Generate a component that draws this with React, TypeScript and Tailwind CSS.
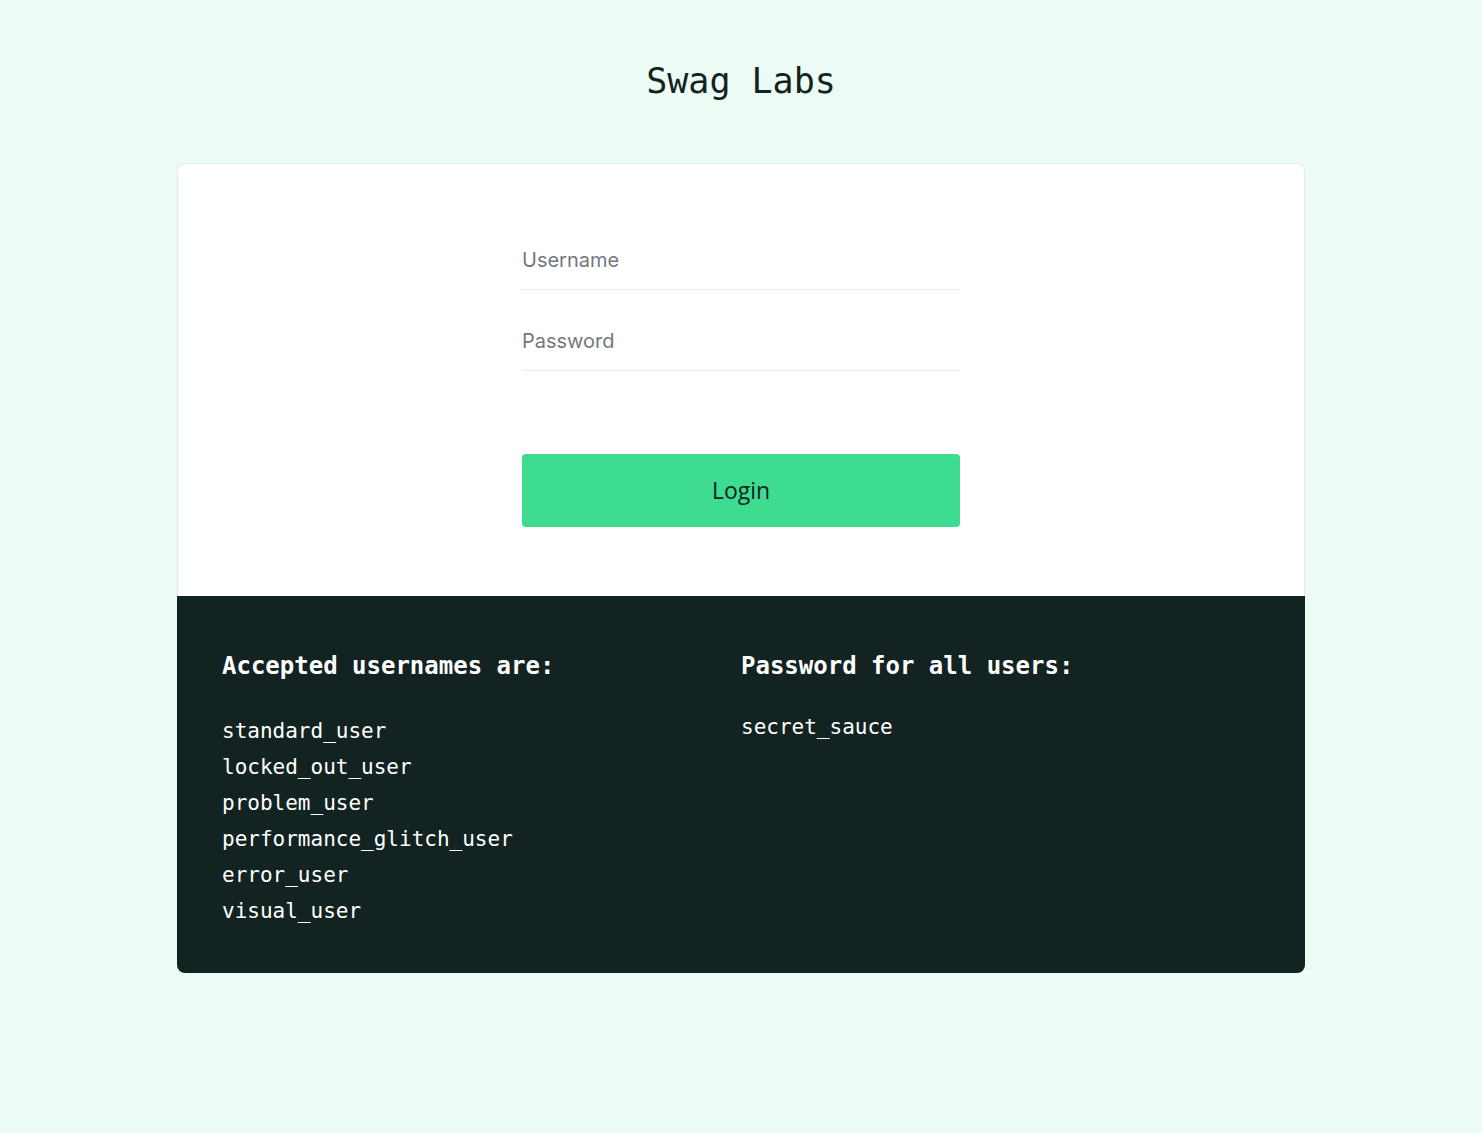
const USERNAMES = [
  "standard_user",
  "locked_out_user",
  "problem_user",
  "performance_glitch_user",
  "error_user",
  "visual_user",
];

const MONO = "font-['DejaVu_Sans_Mono','Liberation_Mono',monospace]";

export default function App() {
  return (
    <div className="min-h-[1133px] w-full bg-[#ecfcf4] pt-[57px]">
      <div
        className={`text-center text-[35px] leading-[48px] text-[#132322] ${MONO}`}
      >
        Swag Labs
      </div>

      <div className="mx-auto mt-[58px] w-[1128px]">
        {/* login form */}
        <div className="rounded-t-[8px] border border-b-0 border-[#e6ebe9] bg-white pt-[78px] pb-[69px]">
          <form className="mx-auto flex w-[438px] flex-col font-['Inter','Noto_Sans',sans-serif]">
            <input
              type="text"
              placeholder="Username"
              className="h-[48px] border-b border-[#ededed] pb-[12px] text-[20px] text-[#132322] outline-none placeholder:text-[#737880]"
            />
            <input
              type="password"
              placeholder="Password"
              className="mt-[33px] h-[48px] border-b border-[#ededed] pb-[12px] text-[20px] text-[#132322] outline-none placeholder:text-[#737880]"
            />
            <button
              type="button"
              className="mt-[83px] h-[73px] rounded-[4px] bg-[#3ddc91] font-['Open_Sans',sans-serif] text-[23px] text-[#132322]"
            >
              Login
            </button>
          </form>
        </div>

        {/* credentials */}
        <div
          className={`grid grid-cols-2 rounded-b-[8px] bg-[#132322] px-[45px] pt-[55px] pb-[44px] text-white ${MONO}`}
        >
          <div>
            <h4 className="text-[24px] font-bold leading-[30px]">
              Accepted usernames are:
            </h4>
            <div className="mt-[32px]">
              {USERNAMES.map((name) => (
                <div key={name} className="text-[21px] leading-[36px]">
                  {name}
                </div>
              ))}
            </div>
          </div>
          <div>
            <h4 className="text-[24px] font-bold leading-[30px]">
              Password for all users:
            </h4>
            <div className="mt-[28px] text-[21px] leading-[36px]">secret_sauce</div>
          </div>
        </div>
      </div>
    </div>
  );
}
